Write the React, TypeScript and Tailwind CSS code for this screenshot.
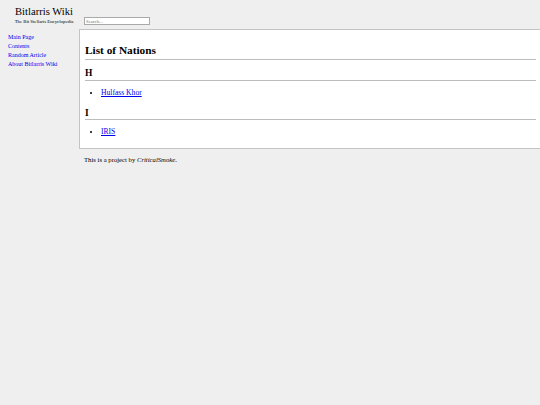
export default function App() {
  const links = ['Main Page', 'Contents', 'Random Article', 'About Bitlarris Wiki'];

  return (
    <div className="min-h-screen bg-[#efefef] flex text-black" style={{ fontFamily: '"Liberation Serif", serif' }}>
      <div className="w-[79px] shrink-0">
        <div className="text-center pt-[5px] w-[88px]">
          <div className="text-[10.6px] leading-[13px]">Bitlarris Wiki</div>
          <div className="text-[4.8px] leading-[6px] mt-[1px] text-black">The Bit Stellaris Encyclopedia</div>
        </div>
        <nav className="mt-[8px] pl-[8px] flex flex-col">
          {links.map((l) => (
            <a key={l} href="#" className="text-[6px] leading-[9px] text-[#0000ee] no-underline">
              {l}
            </a>
          ))}
        </nav>
      </div>

      <div className="flex-1 pt-[17px]">
        <input
          type="text"
          placeholder="Search..."
          className="block ml-[5px] w-[66px] h-[8px] bg-white border border-[#a9a9a9] px-[1px] text-[4.8px] placeholder:text-[#757575] outline-none"
        />
        <div className="mt-[4px] bg-white border border-[#c4c4c4] border-r-0 pl-[5px] pr-[4px] pt-[13px] pb-[11px]">
          <h1 className="text-[11.3px] font-bold leading-[14px] pb-[2px] border-b border-[#bcbcbc]">List of Nations</h1>
          <h2 className="text-[9.5px] font-bold leading-[12px] mt-[7px] pb-[1px] border-b border-[#bcbcbc]">H</h2>
          <ul className="list-disc pl-[16px] mt-[7px] text-[7.6px] leading-[10px]">
            <li>
              <a href="#" className="text-[#0000ee] underline">Hulfass Khor</a>
            </li>
          </ul>
          <h2 className="text-[9.5px] font-bold leading-[12px] mt-[9px] pb-[0px] border-b border-[#bcbcbc]">I</h2>
          <ul className="list-disc pl-[16px] mt-[7px] text-[7.6px] leading-[10px]">
            <li>
              <a href="#" className="text-[#0000ee] underline">IRIS</a>
            </li>
          </ul>
        </div>
        <p className="ml-[5px] mt-[6px] text-[6.7px] leading-[9px]">
          This is a project by <i>CriticalSmoke</i>.
        </p>
      </div>
    </div>
  );
}
